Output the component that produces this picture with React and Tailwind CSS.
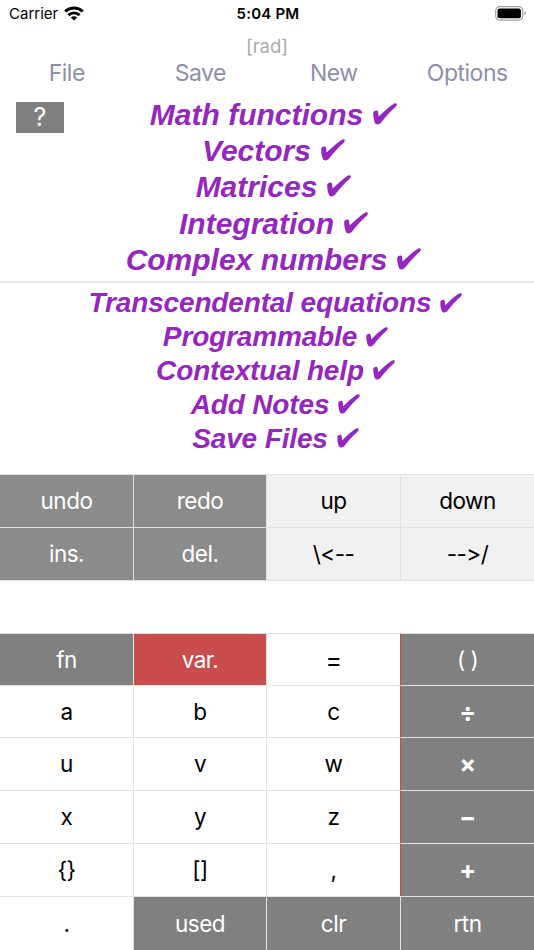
const topFeatures = ['Math functions', 'Vectors', 'Matrices', 'Integration', 'Complex numbers'];

const bottomFeatures = [
    'Transcendental equations',
    'Programmable',
    'Contextual help',
    'Add Notes',
    'Save Files',
];

const menuItems = ['File', 'Save', 'New', 'Options'];

const editKeys = [
    { label: 'undo', tone: 'dim' },
    { label: 'redo', tone: 'dim' },
    { label: 'up', tone: 'pale' },
    { label: 'down', tone: 'pale' },
    { label: 'ins.', tone: 'dim' },
    { label: 'del.', tone: 'dim' },
    { label: '\\<--', tone: 'pale' },
    { label: '-->/', tone: 'pale' },
];

const padKeys = [
    { label: 'fn', tone: 'dark' },
    { label: 'var.', tone: 'red' },
    { label: '=', tone: 'equals', edge: true },
    { label: '( )', tone: 'dark' },
    { label: 'a', tone: 'light' },
    { label: 'b', tone: 'light' },
    { label: 'c', tone: 'light', edge: true },
    { label: '÷', tone: 'operator' },
    { label: 'u', tone: 'light' },
    { label: 'v', tone: 'light' },
    { label: 'w', tone: 'light', edge: true },
    { label: '×', tone: 'operator' },
    { label: 'x', tone: 'light' },
    { label: 'y', tone: 'light' },
    { label: 'z', tone: 'light', edge: true },
    { label: '−', tone: 'operator' },
    { label: '{}', tone: 'light' },
    { label: '[]', tone: 'light' },
    { label: ',', tone: 'light', edge: true },
    { label: '+', tone: 'operator' },
    { label: '.', tone: 'light' },
    { label: 'used', tone: 'dark' },
    { label: 'clr', tone: 'dark' },
    { label: 'rtn', tone: 'dark' },
];

const tones = {
    dim: 'bg-[#8b8b8b] text-white text-[22.5px]',
    pale: 'bg-[#f1f1f1] text-black text-[22.5px]',
    dark: 'bg-[#808080] text-white text-[22.5px]',
    light: 'bg-white text-black text-[22.5px]',
    equals: 'bg-white text-black text-[25px]',
    red: 'bg-[#c94d4d] text-white text-[22.5px]',
    operator: 'bg-[#808080] text-white text-[25px] font-bold',
};

function Key({ label, tone, edge, last }) {
    const border = last ? '' : edge ? 'border-r border-r-[#c94d4d]' : 'border-r border-r-[#e2e2e2]';
    return (
        <button className={`flex items-center justify-center pt-px leading-none tracking-[-0.5px] border-t border-t-[#e2e2e2] ${border} ${tones[tone]}`}>
            {label}
        </button>
    );
}

function Check({ className }) {
    return (
        <svg viewBox="0 0 24 22" className={className} fill="currentColor">
            <path d="M0.3 9.6C0.7 7.6 4.4 6.6 5 8.4L5.6 13.6C10.2 8.9 15.3 4.4 20.4 0.9C21.8 0 23.7 0.1 23.8 1.3C23.9 2.4 23.5 3.1 22.7 3.8C17.4 8.4 12.6 13.9 8.2 19.6C6.8 21.5 3.2 22.3 2 20C0.8 16.8 0 13.2 0.3 9.6Z" />
        </svg>
    );
}

function StatusBar() {
    return (
        <div className="grid grid-cols-3 items-center h-7 pl-[9px] pr-[7px] text-black">
            <div className="flex items-center gap-1.5 text-[15px]">
                <span>Carrier</span>
                <svg viewBox="0 0 20 15" className="w-5 h-[15px] -mt-0.5" fill="none" stroke="currentColor" strokeWidth="3">
                    <path d="M1.2 5.4C6.2 0.7 13.8 0.7 18.8 5.4" />
                    <path d="M4.4 9.2C7.7 6.2 12.3 6.2 15.6 9.2" />
                    <path d="M10 14.6L6.8 11.6C8.6 9.9 11.4 9.9 13.2 11.6Z" fill="currentColor" stroke="none" />
                </svg>
            </div>
            <div className="text-center text-[15px] tracking-[0.2px] font-semibold whitespace-nowrap">5:04 PM</div>
            <svg viewBox="0 0 32 15" className="w-8 h-[15px] -mt-0.5 justify-self-end">
                <rect x="0.7" y="0.7" width="27" height="13.4" rx="4" fill="none" stroke="#a0a0a0" strokeWidth="1.2" />
                <rect x="2.5" y="2.5" width="23.4" height="9.8" rx="2" fill="#000" />
                <path d="M29.3 5.2C31.2 5.9 31.2 8.9 29.3 9.6Z" fill="#a0a0a0" />
            </svg>
        </div>
    );
}

export default function App() {
    return (
        <div className="w-[534px] h-[950px] bg-white overflow-hidden flex flex-col font-['Inter',sans-serif] [font-feature-settings:'calt'_0]">
            <StatusBar />
            <div className="h-[34px] pt-[3px] flex items-center justify-center text-[18.5px] text-[#aaaaaa]">[rad]</div>
            <nav className="h-6 pb-2 grid grid-cols-4 items-center text-center text-[23px] leading-none tracking-[-0.5px] text-[#8e8eaa]">
                {menuItems.map((item) => (
                    <button key={item}>{item}</button>
                ))}
            </nav>

            <section className="relative h-[197px] pt-[10px] pl-[13px] border-b-2 border-[#e8e8e8] text-[#9427bd]">
                <button className="absolute left-4 top-4 w-12 h-[31px] pt-px bg-[#808080] text-white text-[25px] flex items-center justify-center">
                    ?
                </button>
                {topFeatures.map((name) => (
                    <div
                        key={name}
                        className="h-[36.4px] flex items-center justify-center gap-[10px] text-[30px] font-bold italic font-['Liberation_Sans',sans-serif]"
                    >
                        <span>{name}</span>
                        <Check className="w-6 h-[22px] -mt-px" />
                    </div>
                ))}
            </section>

            <section className="h-[191px] pt-[3.5px] pl-[17px] text-[#9427bd]">
                {bottomFeatures.map((name) => (
                    <div
                        key={name}
                        className="h-[33.8px] flex items-center justify-center gap-[9px] text-[28px] tracking-[-0.15px] font-bold italic font-['Liberation_Sans',sans-serif]"
                    >
                        <span>{name}</span>
                        <Check className="w-[22px] h-5 -mt-px" />
                    </div>
                ))}
            </section>

            <div className="h-[107px] grid grid-cols-[134px_133px_134px_133px] grid-rows-[53px_53px] border-b border-[#e2e2e2]">
                {editKeys.map((key, i) => (
                    <Key key={key.label} {...key} last={i % 4 === 3} />
                ))}
            </div>

            <div className="mt-[52px] grid grid-cols-[134px_133px_134px_133px] grid-rows-[52px_52px_53px_53px_53px_54px]">
                {padKeys.map((key, i) => (
                    <Key key={key.label} {...key} last={i % 4 === 3} />
                ))}
            </div>
        </div>
    );
}
